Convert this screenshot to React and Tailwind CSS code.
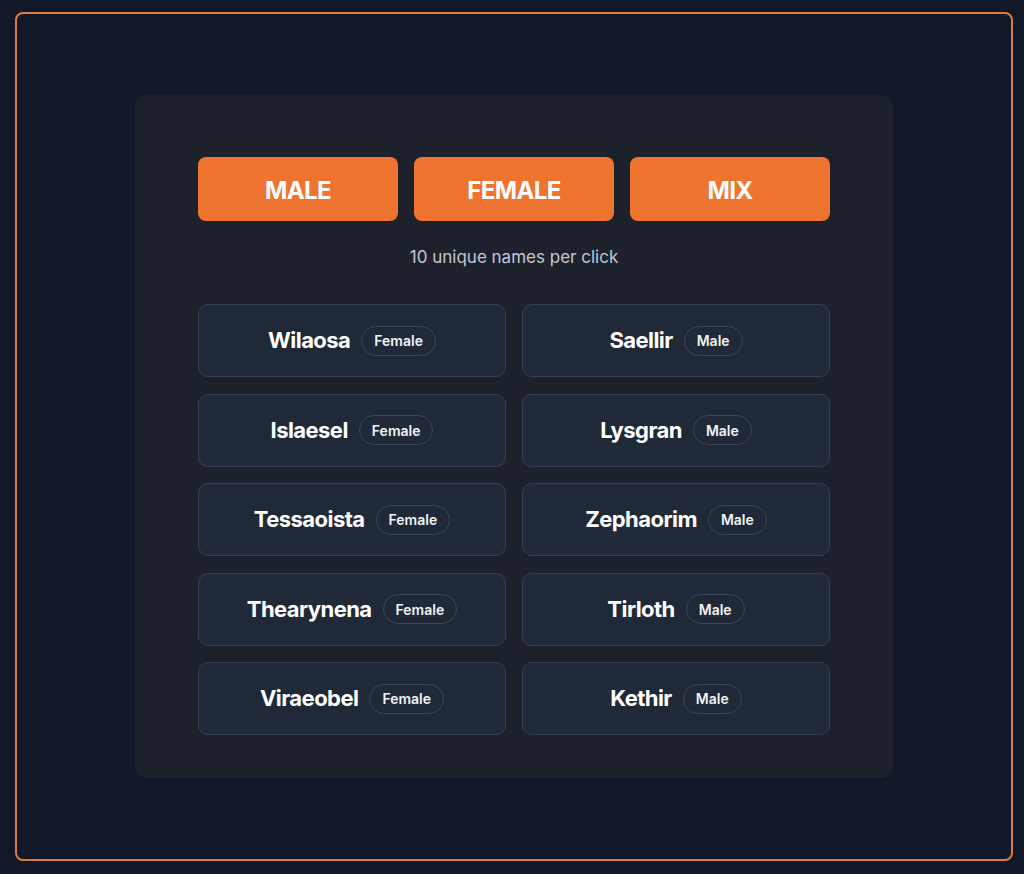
import { useState } from "react";

const names = [
  { name: "Wilaosa", gender: "Female" },
  { name: "Saellir", gender: "Male" },
  { name: "Islaesel", gender: "Female" },
  { name: "Lysgran", gender: "Male" },
  { name: "Tessaoista", gender: "Female" },
  { name: "Zephaorim", gender: "Male" },
  { name: "Thearynena", gender: "Female" },
  { name: "Tirloth", gender: "Male" },
  { name: "Viraeobel", gender: "Female" },
  { name: "Kethir", gender: "Male" },
];

export default function App() {
  const [mode, setMode] = useState("mix");

  return (
    <div
      className="min-h-[874px] bg-[#111827] pt-[12px] pl-[15px]"
      style={{ fontFamily: "Inter, 'Noto Sans', sans-serif" }}
    >
      <div className="w-[998px] h-[849px] border-2 border-[#e07a3c] rounded-lg flex items-center justify-center">
        <div className="w-[758px] bg-[#1d212b] rounded-xl pt-[62px] px-[63px] pb-[43px]">
          <div className="flex gap-4">
            {["MALE", "FEMALE", "MIX"].map((label) => (
              <button
                key={label}
                onClick={() => setMode(label.toLowerCase())}
                className="w-[200px] h-[64px] pt-[3px] rounded-lg bg-[#ef7430] text-white text-[24px] font-bold tracking-tight"
              >
                {label}
              </button>
            ))}
          </div>

          <p className="mt-[24px] text-center text-[17px] leading-[24px] text-[#c3c8d1]">
            10 unique names per click
          </p>

          <div className="mt-[35px] grid grid-cols-2 gap-x-4 gap-y-[16.5px]">
            {names.map((n) => (
              <div
                key={n.name}
                className="h-[73px] rounded-[10px] bg-[#1f2937] border border-[#354052] flex items-center justify-center gap-[11px]"
              >
                <span className="text-[22px] font-bold text-white tracking-tight">
                  {n.name}
                </span>
                <span className="h-[30px] px-3 rounded-full border border-[#3b4657] flex items-center text-[14px] font-semibold text-[#f1f3f6]">
                  {n.gender}
                </span>
              </div>
            ))}
          </div>
        </div>
      </div>
    </div>
  );
}
